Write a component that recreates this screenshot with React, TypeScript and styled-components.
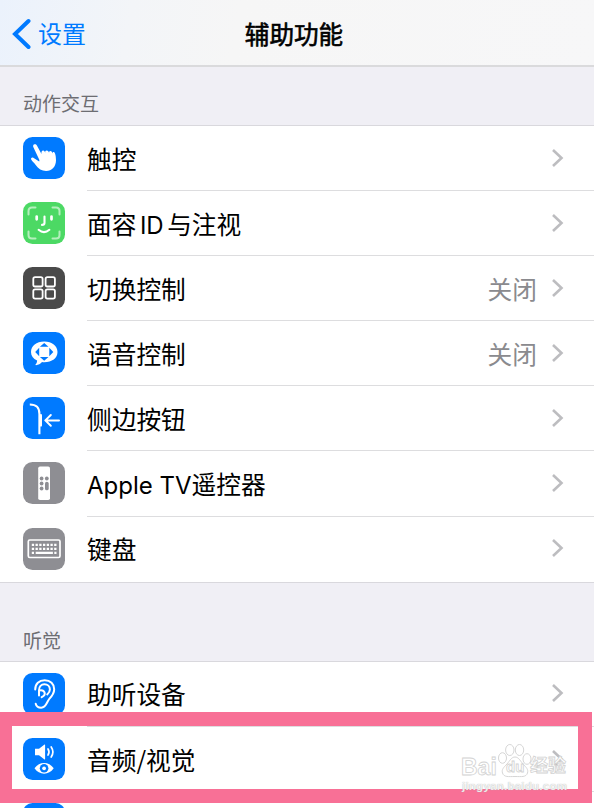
import React from 'react';
import styled, { createGlobalStyle } from 'styled-components';

const GlobalStyle = createGlobalStyle`
  * { box-sizing: border-box; }
  body { margin: 0; background: #fff; overflow: hidden; }
`;

const Screen = styled.div`
  position: relative;
  width: 594px;
  height: 808px;
  overflow: hidden;
  background: #f0eff5;
  color: #000;
  font-family: 'Noto Sans CJK SC', sans-serif;
  font-size: 24.7px;
`;

const NavBar = styled.header`
  display: grid;
  grid-template-columns: 1fr auto 1fr;
  align-items: center;
  height: 67px;
  padding: 2px 12px 0 12px;
  border-bottom: 2px solid #dadadc;
  background: linear-gradient(100deg, #ebf2fc 0, #f3f5f8 22%, #f6f6f6 40%, #f7f7f8 100%);
`;

const BackButton = styled.div`
  display: flex;
  align-items: center;
  gap: 7px;
  color: #007aff;
  font-size: 24px;
  line-height: 36px;

  svg { flex: none; }
  span { margin-top: -1px; }
`;

const Title = styled.h1`
  margin: -2px 3px 0 -3px;
  font-size: 24.6px;
  font-weight: 400;
  line-height: 36px;
  -webkit-text-stroke: 0.6px #000;
`;

const SectionLabel = styled.h2<{ $height: number; $bottom: number }>`
  display: flex;
  align-items: flex-end;
  height: ${(p) => p.$height}px;
  margin: 0;
  padding: 0 23px ${(p) => p.$bottom}px;
  color: #6d6d72;
  font-size: 19px;
  font-weight: 400;
  line-height: 28px;
`;

const List = styled.section`
  border-top: 1px solid #d9d8dd;
  border-bottom: 1px solid #d9d8dd;
  background: #fff;
`;

const Row = styled.div`
  display: flex;
  align-items: stretch;
  height: 65.1px;
  padding-left: 23px;
`;

const IconTile = styled.span<{ $color: string }>`
  flex: none;
  width: 42px;
  height: 42px;
  margin: 11px 22px 0 0;
  border-radius: 9.5px;
  background: ${(p) => p.$color};
  svg { display: block; }
`;

const RowBody = styled.div<{ $last?: boolean }>`
  flex: 1;
  display: flex;
  align-items: center;
  padding: 0 30px 0.6px 0;
  border-bottom: 1px solid ${(p) => (p.$last ? 'transparent' : '#dddddf')};
`;

const Label = styled.span`
  flex: 1;
  white-space: pre;
  line-height: 36px;
`;

const Latin = styled.span<{ $gap?: number }>`
  margin: 0 ${(p) => p.$gap ?? 0}px;
  font-family: Inter, sans-serif;
  font-size: 24px;
  line-height: 0;
`;

const Value = styled.span`
  margin-right: 14px;
  color: #8a8a8e;
  line-height: 36px;
`;

const Chevron = styled.svg`
  flex: none;
`;

const Highlight = styled.div`
  position: absolute;
  left: 0;
  top: 712px;
  width: 592px;
  height: 91px;
  border: solid #f87096;
  border-width: 14px 14px 14px 12.5px;
`;

const Watermark = styled.div`
  position: absolute;
  left: 461px;
  top: 741px;
  width: 112px;
  height: 54px;
  font-family: 'Liberation Sans', 'Noto Sans CJK SC', sans-serif;
  font-weight: 700;
  white-space: nowrap;
  svg { position: absolute; left: 36px; top: 2px; }
`;

const Outlined = styled.span<{ $x: number; $y: number; $size: number }>`
  position: absolute;
  left: ${(p) => p.$x}px;
  top: ${(p) => p.$y}px;
  color: #fff;
  font-size: ${(p) => p.$size}px;
  line-height: 24px;
  -webkit-text-stroke: 0.8px #d2d2d2;
`;

const SiteName = styled.span`
  position: absolute;
  left: 1px;
  top: 38px;
  color: rgba(255, 255, 255, 0.8);
  font-size: 11.6px;
  letter-spacing: 0.2px;
  line-height: 14px;
  text-shadow: 0 0 1px #aaa;
`;

const Glyph = ({ children }: { children: React.ReactNode }) => (
  <svg width="42" height="42" viewBox="0 0 42 42" fill="none" stroke="#fff" strokeLinecap="round" strokeLinejoin="round">
    {children}
  </svg>
);

const TouchIcon = () => (
  <Glyph>
    <path
      fill="#fff"
      stroke="none"
      d="M10.800 7.600c1.100-.8 2.500-.3 3.100.8l4.600 8.500c-.4-2 .4-3.400 1.600-3.400 1.200 0 1.800 1.100 2.100 2.400-.3-1.700.4-2.500 1.500-2.500 1.300 0 2.100 1.200 2.400 2.500-.2-1.200.3-2 1.300-2 1.100 0 1.900 1.200 2.200 2.500.1-1.100.5-1.600 1.200-1.400 1.500.5 2.200 4.500 2.200 8.200 0 6.300-4.100 10.800-9.900 10.800-4.300 0-7.800-2.200-10.400-6-1.300-1.900-3.400-3.500-4.500-5.500-.6-1.300.8-2.500 2.100-1.800l5.900 3.700.2-1.500-6-12.600c-.5-1-.3-2.100.4-2.700z"
    />
  </Glyph>
);

const FaceIcon = () => (
  <Glyph>
    <path strokeWidth="2" stroke="#b5efbd" d="M5.500 12.500V9q0-3.500 3.500-3.500h3.500M29.500 5.500H33q3.500 0 3.500 3.500v3.500M36.500 29.500V33q0 3.500-3.500 3.500h-3.500M12.500 36.500H9q-3.500 0-3.500-3.500v-3.500" />
    <path strokeWidth="2.700" d="M13.700 14.500v2.800M28.500 14.500v2.800" />
    <path strokeWidth="2.100" d="M21.500 14.500v6.600q0 1.800-2.500 1.800M15.600 27.800q5.400 4.500 10.800 0" />
  </Glyph>
);

const SwitchIcon = () => (
  <Glyph>
    <g strokeWidth="1.800">
      <rect x="10.300" y="10.200" width="9.300" height="9.300" rx="1.800" />
      <rect x="22.600" y="10.200" width="9.300" height="9.300" rx="1.800" />
      <rect x="10.300" y="22.300" width="9.300" height="9.300" rx="1.800" />
      <rect x="22.600" y="22.300" width="9.300" height="9.300" rx="1.800" />
    </g>
  </Glyph>
);

const VoiceIcon = () => (
  <Glyph>
    <path fill="#fff" stroke="none" d="M21.200 9.500C29 9.500 34.500 14 34.500 20S29 30.300 21.200 30.300c-.8 0-1.500 0-2.200-.2-1.500 1.800-3.700 3-6 3.100-.7 0-.7-.5-.3-.9 1-1 1.400-2.200 1.400-3.700C10.200 26.700 8 23.700 8 20c0-6 5.400-10.500 13.200-10.500z" />
    <path fill="#007aff" stroke="none" d="M21.200 11l4.300 3.700h-8.600zM21.200 28.800l4.300-3.700h-8.600zM12.200 20l4-4.300v8.600zM30.300 20l-4-4.300v8.600z" />
  </Glyph>
);

const SideIcon = () => (
  <Glyph>
    <path strokeWidth="2.100" strokeLinecap="butt" d="M6.800 7.500c6.700 0 9.600 2.800 9.600 9.400v20.300" />
    <path strokeWidth="2.200" d="M17.900 18.200v10.400" />
    <path strokeWidth="2" d="M36 23.400H22.800M27.800 18l-5.500 5.400 5.500 5.400" />
  </Glyph>
);

const RemoteIcon = () => (
  <Glyph>
    <rect x="15.200" y="4.500" width="11.800" height="33.500" rx="1.800" fill="#fff" stroke="none" />
    <g fill="#8e8e93" stroke="none">
      <circle cx="18.600" cy="16.500" r="1.900" />
      <circle cx="23.800" cy="16.500" r="1.900" />
      <circle cx="18.600" cy="21.500" r="1.900" />
      <circle cx="18.600" cy="26.500" r="1.900" />
      <rect x="22" y="19.700" width="3.700" height="8.600" rx="1.850" />
    </g>
  </Glyph>
);

const KeyboardIcon = () => (
  <Glyph>
    <rect x="5.300" y="12" width="31.700" height="17.500" rx="1.500" strokeWidth="1.700" />
    <g strokeWidth="2.200" strokeLinecap="butt">
      <path strokeDasharray="2.300 1.430" d="M8.800 16.900H33.500M8.800 20.800H33.500" />
      <path d="M8.800 24.900h2.200M12.700 24.900h17.200M31.300 24.900h2.200" />
    </g>
  </Glyph>
);

const EarIcon = () => (
  <Glyph>
    <g strokeWidth="2">
      <path d="M12.200 16.500C12.200 11 16 7.300 21.700 7.300c5.700 0 9.500 3.700 9.500 9 0 4.500-2.400 7-4.900 9.600-2.500 2.700-2.900 8.800-8.100 8.800-2.800 0-4.900-1.600-5.500-4" />
      <path d="M16 22.500v-5.300c0-3.700 2.200-6 5.400-6s5.500 2.200 5.500 5.300c0 2.200-1.200 3.600-2.700 4.900M16.400 17.400c5.400-1.200 7.500 4.300 2.300 6.800" />
    </g>
  </Glyph>
);

const AudioVisualIcon = () => (
  <Glyph>
    <path fill="#fff" stroke="none" d="M12 10.800h4l5.500-4.300q.6-.3.600.5v14q0 .8-.6.500L16 17.200h-4z" />
    <path strokeWidth="1.700" d="M25 11q2 3 0 6M28.200 9q3.400 5 0 10" />
    <path fill="#fff" stroke="none" d="M11.500 30.300c2.600-3.600 5.800-5.300 9.600-5.300s7 1.700 9.600 5.300c-2.600 3.700-5.800 5.400-9.600 5.400s-7-1.700-9.600-5.400z" />
    <circle cx="21.100" cy="30.300" r="4.300" fill="#007aff" stroke="none" />
    <circle cx="21.100" cy="30.300" r="1.900" fill="#fff" stroke="none" />
  </Glyph>
);

interface Item {
  label: React.ReactNode;
  icon?: React.ReactNode;
  color: string;
  value?: string;
}

const BLUE = '#007aff';
const GRAY = '#8e8e93';

const motor: Item[] = [
  { label: '触控', icon: <TouchIcon />, color: BLUE },
  { label: <>面容<Latin $gap={3.5}>ID</Latin>与注视</>, icon: <FaceIcon />, color: '#4cd964' },
  { label: '切换控制', icon: <SwitchIcon />, color: '#4a4a4a', value: '关闭' },
  { label: '语音控制', icon: <VoiceIcon />, color: BLUE, value: '关闭' },
  { label: '侧边按钮', icon: <SideIcon />, color: BLUE },
  { label: <><Latin>Apple TV</Latin>遥控器</>, icon: <RemoteIcon />, color: GRAY },
  { label: '键盘', icon: <KeyboardIcon />, color: GRAY },
];

const hearing: Item[] = [
  { label: '助听设备', icon: <EarIcon />, color: BLUE },
  { label: '音频/视觉', icon: <AudioVisualIcon />, color: BLUE },
  { label: '', color: BLUE },
];

const Rows = ({ items }: { items: Item[] }) => (
  <List>
    {items.map((item, i) => (
      <Row key={i}>
        <IconTile $color={item.color}>{item.icon}</IconTile>
        <RowBody $last={i === items.length - 1}>
          <Label>{item.label}</Label>
          {item.value && <Value>{item.value}</Value>}
          <Chevron width="13" height="20" viewBox="0 0 13 20" fill="none" stroke="#bdbdc0" strokeWidth="2.600">
            <path d="M2 2l8.500 8L2 18" />
          </Chevron>
        </RowBody>
      </Row>
    ))}
  </List>
);

export default function App() {
  return (
    <>
      <GlobalStyle />
      <Screen>
        <NavBar>
          <BackButton>
            <svg width="19" height="32" viewBox="0 0 19 32" fill="none" stroke="#007aff" strokeWidth="4" strokeLinecap="round">
              <path d="M16.500 3L3 16l13.500 13" />
            </svg>
            <span>设置</span>
          </BackButton>
          <Title>辅助功能</Title>
        </NavBar>
        <SectionLabel $height={58} $bottom={8}>动作交互</SectionLabel>
        <Rows items={motor} />
        <SectionLabel $height={78} $bottom={7}>听觉</SectionLabel>
        <Rows items={hearing} />
        <Highlight />
        <Watermark>
          <Outlined $x={0} $y={14} $size={23}>Bai</Outlined>
          <svg width="36" height="36" viewBox="0 0 36 36" fill="#fff" stroke="#d6d6d6">
            <ellipse cx="5.500" cy="15" rx="4" ry="5.300" />
            <ellipse cx="12.800" cy="7" rx="4.200" ry="5.500" />
            <ellipse cx="22.500" cy="7" rx="4.200" ry="5.500" />
            <ellipse cx="30" cy="16" rx="4" ry="5.300" />
            <path d="M18 14c3.500 0 5 3.500 8 7 3.500 3.500 5.500 5.500 4.500 9-1.500 4.500-6 3.500-12.500 3.500S7 34.500 5.500 30c-1-3.500 1-5.500 4.500-9 3-3.500 4.500-7 8-7z" />
          </svg>
          <Outlined $x={45} $y={14} $size={15}>du</Outlined>
          <Outlined $x={69} $y={13} $size={18}>经验</Outlined>
          <SiteName>jingyan.baidu.com</SiteName>
        </Watermark>
      </Screen>
    </>
  );
}
